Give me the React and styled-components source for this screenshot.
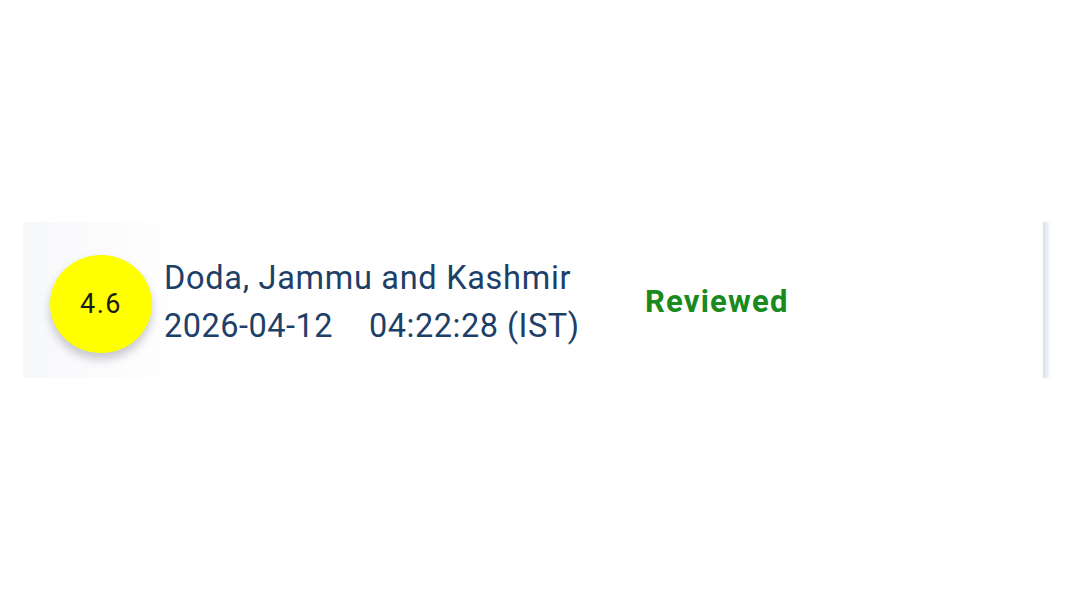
import React from "react";
import styled, { createGlobalStyle } from "styled-components";

const GlobalStyle = createGlobalStyle`
  html, body {
    margin: 0;
    padding: 0;
    background: #ffffff;
  }
  body {
    font-family: Roboto, "Noto Sans", sans-serif;
  }
`;

const Page = styled.div`
  width: 1068px;
  height: 600px;
  padding: 222px 0 0 23px;
  box-sizing: border-box;
`;

const Card = styled.div`
  display: flex;
  align-items: center;
  width: 1028px;
  height: 156px;
  box-sizing: border-box;
  padding: 7px 0 0 27px;
  background: linear-gradient(90deg, #f7f8fa 0%, #ffffff 16%, #ffffff 100%);
  position: relative;

  &::after {
    content: "";
    position: absolute;
    top: 0;
    right: 0;
    width: 8px;
    height: 100%;
    background: linear-gradient(90deg, #d6dfe9 0%, #e9eef4 45%, #ffffff 100%);
  }
`;

const Magnitude = styled.div`
  flex: none;
  width: 102px;
  height: 98px;
  border-radius: 50%;
  background: #ffff00;
  box-shadow: 0 6px 10px rgba(60, 60, 80, 0.28);
  display: flex;
  align-items: center;
  justify-content: center;
  font-size: 27px;
  letter-spacing: 1.5px;
  color: #1a1a1a;
`;

const Details = styled.div`
  flex: none;
  width: 481px;
  margin-left: 12px;
  color: #1d4068;
  font-size: 32.5px;
  line-height: 48px;
  margin-top: -4px;
`;

const Line = styled.div`
  white-space: nowrap;
  letter-spacing: ${(p) => p.$spacing};
`;

const Time = styled.span`
  margin-left: 36px;
`;

const Status = styled.div`
  font-size: 31px;
  letter-spacing: 1.2px;
  font-weight: 700;
  color: ${(p) => p.color};
  margin-top: -5px;
`;

const quake = {
  magnitude: "4.6",
  place: "Doda, Jammu and Kashmir",
  date: "2026-04-12",
  time: "04:22:28 (IST)",
  status: "Reviewed",
};

export default function App() {
  return (
    <>
      <GlobalStyle />
      <Page>
        <Card>
          <Magnitude>{quake.magnitude}</Magnitude>
          <Details>
            <Line $spacing="0.7px">{quake.place}</Line>
            <Line $spacing="0.5px">
              <span>{quake.date}</span>
              <Time>{quake.time}</Time>
            </Line>
          </Details>
          <Status color="#198a1b">{quake.status}</Status>
        </Card>
      </Page>
    </>
  );
}
